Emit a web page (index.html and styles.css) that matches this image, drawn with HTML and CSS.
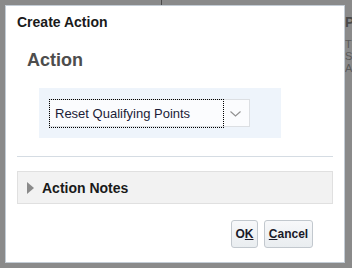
FILE: index.html
```html
<!DOCTYPE html>
<html>
<head>
<meta charset="utf-8">
<link rel="stylesheet" href="styles.css">
</head>
<body>
<div class="page">
  <div class="left-col"></div>
  <div class="divider"></div>
  <div class="right-col">
    <div class="bg-title">Po</div>
    <div class="bg-line">This</div>
    <div class="bg-line">Se</div>
    <div class="bg-line">Af</div>
  </div>
</div>
<div class="dialog">
  <div class="dlg-title">Create Action</div>
  <div class="section-title">Action</div>
  <div class="panel">
    <div class="select">
      <span class="select-text">Reset Qualifying Points</span>
      <svg class="chev" width="11" height="6" viewBox="0 0 11 6"><path d="M0.5 0.5 L5.5 5 L10.5 0.5" fill="none" stroke="#909090" stroke-width="1.1"/></svg>
      <span class="focus-ring"></span>
    </div>
  </div>
  <div class="sep"></div>
  <div class="notes">
    <svg class="tri" width="7" height="12" viewBox="0 0 7 12"><path d="M0 0 L7 6 L0 12 Z" fill="#8a8a8a"/></svg>
    <span class="notes-text">Action Notes</span>
  </div>
  <div class="buttons">
    <button class="btn btn-ok">O<u>K</u></button>
    <button class="btn btn-cancel"><u>C</u>ancel</button>
  </div>
</div>
</body>
</html>
```
FILE: styles.css
```css
html, body {
  margin: 0;
  padding: 0;
}
body {
  width: 352px;
  height: 268px;
  overflow: hidden;
  background: #8a8a8a;
  font-family: "Liberation Sans", Arial, sans-serif;
  position: relative;
}
.page {
  display: grid;
  grid-template-columns: 161px 1px 1fr;
  height: 268px;
}
.divider {
  background: #4a4a4a;
  height: 8px;
}
.right-col {
  padding-left: 183px;
  padding-top: 14px;
  white-space: nowrap;
  overflow: hidden;
}
.bg-title {
  font-weight: bold;
  font-size: 14px;
  color: #4a4a4a;
  line-height: 16px;
  margin-bottom: 8px;
}
.bg-line {
  font-size: 11px;
  color: #5a5a5a;
  line-height: 12px;
}
.dialog {
  position: absolute;
  left: 5px;
  top: 5px;
  width: 338px;
  height: 256px;
  background: #fff;
  border: 1px solid #c3ccd5;
}
.dlg-title {
  font-size: 14px;
  font-weight: bold;
  color: #1a1a1a;
  line-height: 16px;
  padding: 8px 0 0 11px;
}
.section-title {
  font-size: 18px;
  font-weight: bold;
  color: #4d4d4d;
  line-height: 21px;
  padding: 20px 0 0 21px;
}
.panel {
  margin: 17px 0 0 33px;
  width: 242px;
  height: 50px;
  box-sizing: border-box;
  background: #eef4fb;
  padding: 11px 0 0 10px;
}
.select {
  position: relative;
  width: 201px;
  height: 28px;
  box-sizing: border-box;
  border: 1px solid #dcdfe3;
  background: #fbfcfe;
  display: flex;
  align-items: center;
  justify-content: space-between;
  padding: 0 8px 0 5px;
}
.select-text {
  font-size: 13px;
  color: #1c1c38;
}
.chev {
  display: block;
  margin-top: 1px;
}
.focus-ring {
  position: absolute;
  left: -1px;
  top: -1px;
  width: 175px;
  height: 29px;
  box-sizing: border-box;
  border: 1px dotted #000;
}
.sep {
  margin: 18px 0 0 11px;
  width: 316px;
  height: 1px;
  background: #d5dce3;
}
.notes {
  margin: 14px 0 0 11px;
  width: 316px;
  height: 33px;
  box-sizing: border-box;
  border: 1px solid #e0e0e0;
  background: #f2f2f2;
  display: flex;
  align-items: center;
  padding-left: 9px;
}
.tri {
  display: block;
  margin-right: 8px;
}
.notes-text {
  font-size: 14px;
  font-weight: bold;
  color: #1a1a1a;
}
.buttons {
  display: flex;
  justify-content: flex-end;
  gap: 6px;
  margin: 16px 0 0 0;
  padding-right: 31px;
}
.btn {
  height: 28px;
  box-sizing: border-box;
  border: 1px solid #c2c8ce;
  border-radius: 3px;
  background: linear-gradient(#f7f8fa, #e9edf0);
  font-family: "Liberation Sans", Arial, sans-serif;
  font-size: 12px;
  font-weight: bold;
  color: #1a1a2a;
  padding: 0;
  margin: 0;
}
.btn-ok {
  width: 27px;
}
.btn-cancel {
  width: 49px;
}
```
